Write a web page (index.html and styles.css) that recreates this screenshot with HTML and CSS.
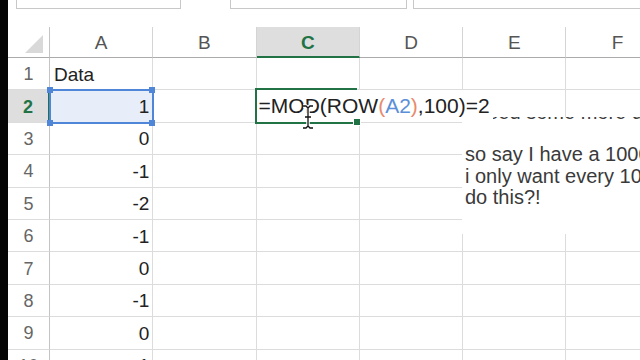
FILE: index.html
```html
<!DOCTYPE html>
<html lang="en">
<head>
    <meta charset="UTF-8">
    <title>Excel - MOD ROW</title>
    <link rel="stylesheet" href="styles.css">
</head>
<body>
    <div class="screen">
        <div class="edge"></div>

        <div class="excel">
            <!-- name box / formula bar, only the bottom is visible -->
            <div class="bar">
                <div class="field name-box"></div>
                <div class="field fx-box"></div>
                <div class="field formula-box"></div>
            </div>

            <div class="sheet">
                <div class="cell corner"><span class="tri"></span></div>
                <div class="cell col-head">A</div>
                <div class="cell col-head">B</div>
                <div class="cell col-head sel">C</div>
                <div class="cell col-head">D</div>
                <div class="cell col-head">E</div>
                <div class="cell col-head">F</div>

                <div class="cell row-head">1</div>
                <div class="cell">Data</div>
                <div class="cell"></div><div class="cell"></div><div class="cell"></div><div class="cell"></div><div class="cell"></div>

                <div class="cell row-head sel">2</div>
                <div class="cell num ref">1
                    <span class="handle tl"></span><span class="handle tr"></span>
                    <span class="handle bl"></span><span class="handle br"></span>
                </div>
                <div class="cell"></div>
                <div class="cell active">
                    <span class="edit">=MOD(ROW<span class="paren">(</span><span class="addr">A2</span><span class="paren">)</span>,100)=2</span>
                    <span class="fill"></span>
                </div>
                <div class="cell"></div><div class="cell"></div><div class="cell"></div>

                <div class="cell row-head">3</div>
                <div class="cell num">0</div>
                <div class="cell"></div><div class="cell"></div><div class="cell"></div><div class="cell"></div><div class="cell"></div>

                <div class="cell row-head">4</div>
                <div class="cell num">-1</div>
                <div class="cell"></div><div class="cell"></div><div class="cell"></div><div class="cell"></div><div class="cell"></div>

                <div class="cell row-head">5</div>
                <div class="cell num">-2</div>
                <div class="cell"></div><div class="cell"></div><div class="cell"></div><div class="cell"></div><div class="cell"></div>

                <div class="cell row-head">6</div>
                <div class="cell num">-1</div>
                <div class="cell"></div><div class="cell"></div><div class="cell"></div><div class="cell"></div><div class="cell"></div>

                <div class="cell row-head">7</div>
                <div class="cell num">0</div>
                <div class="cell"></div><div class="cell"></div><div class="cell"></div><div class="cell"></div><div class="cell"></div>

                <div class="cell row-head">8</div>
                <div class="cell num">-1</div>
                <div class="cell"></div><div class="cell"></div><div class="cell"></div><div class="cell"></div><div class="cell"></div>

                <div class="cell row-head">9</div>
                <div class="cell num">0</div>
                <div class="cell"></div><div class="cell"></div><div class="cell"></div><div class="cell"></div><div class="cell"></div>

                <div class="cell row-head">10</div>
                <div class="cell num">-1</div>
                <div class="cell"></div><div class="cell"></div><div class="cell"></div><div class="cell"></div><div class="cell"></div>
            </div>
        </div>

        <!-- question window lying over the sheet -->
        <div class="note">
            <p class="cut">I need some more data</p>
            <p>so say I have a 1000 rows of data<br>i only want every 100th row how do I<br>do this?!</p>
        </div>

        <!-- mouse I-beam -->
        <svg class="cursor" width="14" height="26" viewBox="0 0 14 26">
            <path d="M2 2h3l2 2l2-2h3M7 4v18M2 24h3l2-2l2 2h3M4 13h6" fill="none" stroke="#fff" stroke-width="3.5"/>
            <path d="M2 2h3l2 2l2-2h3M7 4v18M2 24h3l2-2l2 2h3M4 13h6" fill="none" stroke="#111" stroke-width="1.3"/>
        </svg>
    </div>
</body>
</html>
```

FILE: styles.css
```css
body {
    margin: 0;
    padding: 0;
    overflow: hidden;
    background-color: #ffffff;
    font-family: 'Liberation Sans', Arial, sans-serif;
}

.screen {
    position: relative;
    width: 640px;
    height: 360px;
    display: flex;
    overflow: hidden;
}

.edge {
    width: 8px;
    flex-shrink: 0;
    background-color: #050505;
}

.excel {
    flex: 1;
    overflow: hidden;
    display: flex;
    flex-direction: column;
}

/* Formula bar */
.bar {
    height: 27px;
    flex-shrink: 0;
    display: flex;
    align-items: flex-start;
}

.field {
    height: 8px;
    border: 1px solid #c8c8c8;
    border-top: none;
    background-color: #ffffff;
}

.name-box {
    margin-left: 8px;
    width: 163px;
}

.fx-box {
    margin-left: 49px;
    width: 175px;
}

.formula-box {
    margin-left: 6px;
    flex: 1;
    border-right: none;
}

/* Grid */
.sheet {
    display: grid;
    grid-template-columns: 42px repeat(6, 103.3px);
    grid-template-rows: 31px repeat(10, 32.4px);
    font-size: 19px;
    color: #222222;
}

.cell {
    box-sizing: border-box;
    display: flex;
    align-items: center;
    padding: 2px 4px 0;
    border-right: 1px solid #dcdcdc;
    border-bottom: 1px solid #dcdcdc;
    white-space: nowrap;
}

.num {
    justify-content: flex-end;
    padding-right: 3px;
}

.corner {
    position: relative;
    border-right: 1px solid #c4c4c4;
    border-bottom: 1px solid #ababab;
}

.corner .tri {
    position: absolute;
    right: 6px;
    bottom: 4px;
    width: 0;
    height: 0;
    border-left: 18px solid transparent;
    border-bottom: 18px solid #d9d9d9;
}

.col-head {
    justify-content: center;
    color: #555555;
    border-bottom: 1px solid #ababab;
    border-right: 1px solid #d4d4d4;
}

.row-head {
    justify-content: center;
    color: #666666;
    font-size: 18px;
    border-right: 1px solid #c4c4c4;
}

.col-head.sel {
    background-color: #dedede;
    color: #217346;
    font-weight: bold;
    border-bottom: 2px solid #217346;
}

.row-head.sel {
    background-color: #dedede;
    color: #217346;
    font-weight: bold;
    border-right: 2px solid #217346;
}

/* A2, referenced by the formula */
.ref {
    position: relative;
    z-index: 1;
    background-color: #e7eef9;
    outline: 2px solid #4f86d8;
    outline-offset: -1px;
}

.handle {
    position: absolute;
    width: 6px;
    height: 6px;
    background-color: #4f86d8;
}

.tl { left: -3px; top: -3px; }
.tr { right: -3px; top: -3px; }
.bl { left: -3px; bottom: -4px; }
.br { right: -3px; bottom: -4px; }

/* C2, being edited */
.active {
    position: relative;
    z-index: 2;
    padding: 0 0 0 2px;
    overflow: visible;
}

.active::before {
    content: "";
    position: absolute;
    left: -2px;
    top: -2px;
    right: 2px;
    bottom: -2px;
    border: 2px solid #217346;
    border-right: none;
    z-index: 1;
}

.edit {
    height: 100%;
    display: flex;
    align-items: center;
    padding-right: 3px;
    background-color: #ffffff;
    font-size: 21px;
    color: #222222;
}

.paren {
    color: #e88a6c;
}

.addr {
    color: #5b8fd8;
}

.fill {
    position: absolute;
    right: -2px;
    bottom: -4px;
    width: 6px;
    height: 6px;
    background-color: #217346;
    border: 1px solid #ffffff;
    z-index: 2;
}

/* Question window */
.note {
    position: absolute;
    left: 462px;
    top: 117px;
    width: 178px;
    height: 117px;
    background-color: #ffffff;
    overflow: hidden;
    padding-left: 3px;
    box-sizing: border-box;
    color: #3a3a3a;
    font-size: 20px;
    line-height: 21.5px;
    white-space: nowrap;
    z-index: 1;
}

.note p {
    margin: 0;
}

.note .cut {
    margin-top: -15px;
    margin-bottom: 20.5px;
}

.cursor {
    position: absolute;
    left: 301px;
    top: 104px;
    z-index: 5;
}
```
